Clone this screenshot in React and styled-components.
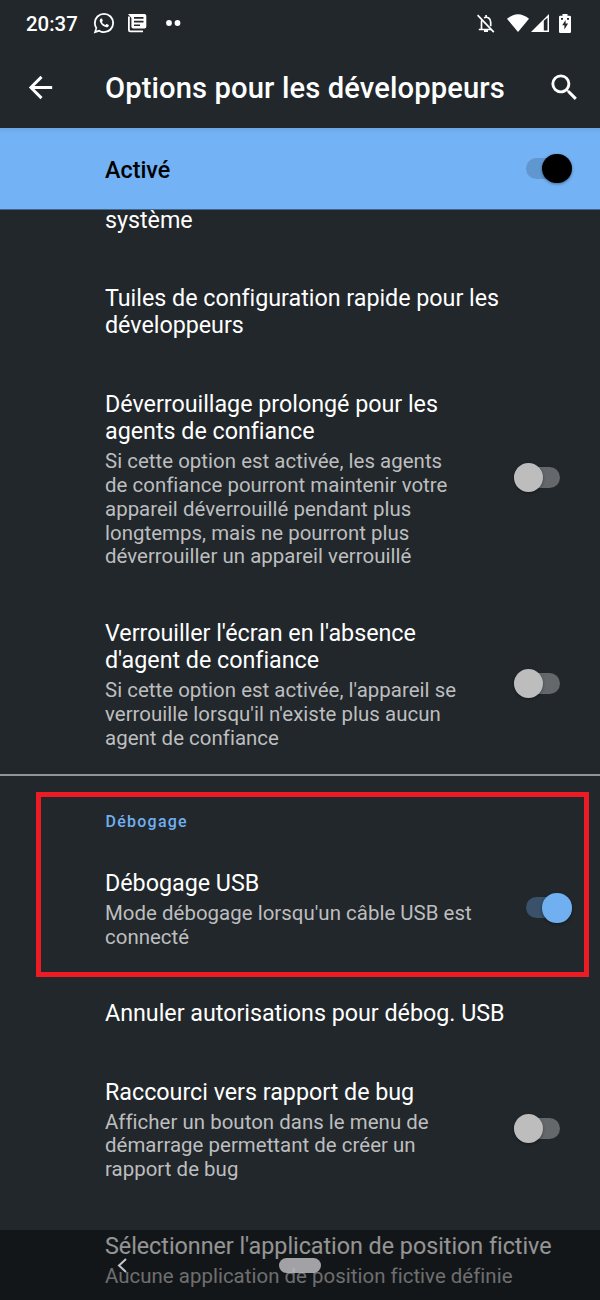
import React from "react";
import styled, { createGlobalStyle } from "styled-components";

const Global = createGlobalStyle`
  * { box-sizing: border-box; }
  body { margin: 0; background: #22272b; font-family: Roboto, "Liberation Sans", sans-serif; }
`;

const Screen = styled.div`
  position: relative;
  display: flex;
  flex-direction: column;
  width: 600px;
  height: 1300px;
  overflow: hidden;
  background: #22272b;
  color: #fff;
`;

const StatusBar = styled.div`
  display: flex;
  justify-content: space-between;
  align-items: center;
  height: 46px;
  flex: none;
  padding: 0 28.7px 0 26px;
`;

const StatusGroup = styled.div`
  display: flex;
  align-items: center;
`;

const Clock = styled.span`
  width: 67.3px;
  font-size: 20.4px;
  font-weight: 500;
  line-height: 24px;
  padding-top: 1px;
  white-space: nowrap;
`;

const Icon = styled.svg`
  display: block;
  flex: none;
  width: ${(p) => p.$w}px;
  height: ${(p) => p.$h || p.$w}px;
  margin-left: ${(p) => p.$ml || 0}px;
  overflow: visible;
`;

const Toolbar = styled.header`
  display: flex;
  align-items: center;
  height: 82px;
  flex: none;
  padding: 0 18px 0 23px;
`;

const Title = styled.h1`
  flex: 1;
  margin: 0 0 0 47px;
  padding-top: 1.6px;
  font-size: 29.17px;
  font-weight: 500;
  line-height: 34px;
  letter-spacing: 0.12px;
  white-space: nowrap;
`;

const MasterBar = styled.div`
  display: flex;
  align-items: center;
  justify-content: space-between;
  height: 82px;
  flex: none;
  padding: 3px 28.5px 0 105px;
  background: linear-gradient(#6ba6e4, #72b2f5 5px);
  border-bottom: 1px solid #406791;
  color: #000;
  font-size: 23.33px;
  font-weight: 500;
`;

const List = styled.main`
  flex: 1;
  min-height: 0;
  overflow: hidden;
`;

const Scroll = styled.div`
  margin-top: -28.7px;
`;

const Row = styled.div`
  display: flex;
  align-items: center;
  justify-content: space-between;
  padding: 25.6px ${(p) => (p.$on ? 28.5 : 40)}px ${(p) => (p.$dense ? 24.9 : 25.2)}px 105px;
`;

const RowTitle = styled.div`
  font-size: 23.3px;
  line-height: 27.34px;
  letter-spacing: -0.02px;
  white-space: pre;
`;

const Summary = styled.div`
  margin-top: 4.6px;
  font-size: 20.42px;
  line-height: 23.92px;
  letter-spacing: 0.035px;
  color: #bdbebf;
  white-space: pre;
`;

const Section = styled.section`
  position: relative;
  margin-top: -2px;
  border-top: 2px solid #92969a;
`;

const Category = styled.h2`
  margin: 0;
  height: 68.8px;
  padding: 36px 0 0 105.5px;
  font-size: 16px;
  font-weight: 500;
  line-height: 20px;
  letter-spacing: 1.25px;
  color: #70b0f2;
`;

const Highlight = styled.div`
  position: absolute;
  left: 36px;
  top: 16px;
  width: 553px;
  height: 185px;
  border: 5px solid #ed1c24;
  pointer-events: none;
`;

const Track = styled.span`
  position: relative;
  display: flex;
  align-items: center;
  justify-content: ${(p) => (p.$on ? "flex-end" : "flex-start")};
  flex: none;
  width: 46px;
  height: 29px;
  margin-bottom: ${(p) => p.$lift}px;
  &::before {
    content: "";
    position: absolute;
    inset: 4px 0;
    border-radius: 11px;
    background: ${(p) => p.$track};
  }
`;

const Thumb = styled.span`
  position: relative;
  width: 29.4px;
  height: 29.4px;
  border-radius: 50%;
  background: ${(p) => p.$color};
  box-shadow: 0 1px 3px rgba(0, 0, 0, 0.4);
`;

const NavBar = styled.nav`
  position: absolute;
  left: 0;
  right: 0;
  bottom: 0;
  height: 70px;
  display: flex;
  align-items: center;
  padding-left: 117px;
  background: rgba(0, 0, 0, 0.42);
`;

const HomePill = styled.span`
  width: 42px;
  height: 15px;
  margin-left: 152px;
  border-radius: 8px;
  background: rgba(190, 190, 193, 0.84);
`;

const THEMES = {
  off: { track: "#64686b", thumb: "#bdbdbd", lift: 4.4 },
  on: { track: "#39516a", thumb: "#70aff0", lift: 4.4 },
  master: { track: "#6197d0", thumb: "#000", lift: 3 },
};

function Switch({ kind }) {
  const t = THEMES[kind];
  return (
    <Track $on={kind !== "off"} $track={t.track} $lift={t.lift}>
      <Thumb $color={t.thumb} />
    </Track>
  );
}

function Preference({ title, summary, toggle }) {
  return (
    <Row $on={toggle === "on"} $dense={Boolean(summary)}>
      <div>
        <RowTitle>{title}</RowTitle>
        {summary && <Summary>{summary}</Summary>}
      </div>
      {toggle && <Switch kind={toggle} />}
    </Row>
  );
}

export default function App() {
  return (
    <Screen>
      <Global />
      <StatusBar>
        <StatusGroup>
          <Clock>20:37</Clock>
          <Icon $w={22} viewBox="0 0 24 24" fill="#fff">
            <path d="M16.75 13.96c.25.13.41.2.46.3.06.11.04.61-.21 1.18-.2.56-1.24 1.1-1.7 1.12-.46.02-.47.36-2.96-.73-2.49-1.09-3.99-3.75-4.11-3.92-.12-.17-.96-1.38-.92-2.61.05-1.22.69-1.8.95-2.04.24-.26.51-.29.68-.26h.47c.15 0 .36-.06.55.45l.69 1.87c.06.13.1.28.01.44l-.27.41-.39.42c-.12.12-.26.25-.12.5.12.26.62 1.09 1.32 1.78.91.88 1.71 1.17 1.95 1.3.24.14.39.12.54-.04l.81-.94c.19-.25.35-.19.58-.11l1.67.88M12 1a11 11 0 0 1 11 11 11 11 0 0 1-11 11c-1.97 0-3.8-.52-5.4-1.43L.8 23.5l1.9-5.8A10.9 10.9 0 0 1 1 12 11 11 0 0 1 12 1m0 2a9 9 0 0 0-9 9c0 1.94.62 3.74 1.66 5.2l-1.03 3.1 3.23-1.05A8.9 8.9 0 0 0 12 21a9 9 0 0 0 9-9 9 9 0 0 0-9-9z" />
          </Icon>
          <Icon $w={19} viewBox="0 0 19 19" $ml={12.3} fill="#fff">
            <path d="M0 2.4V16q0 2.2 2.2 2.2H15v-1.7H1.8V2.4z" />
            <path fillRule="evenodd" d="M0 0h16.5q1.8 0 1.8 1.8v11q0 1.8-1.8 1.8H5.2q-1.8 0-1.8-1.8V4zM6 3v1.7h9.5V3zm0 3.8v1.7h9.5V6.8zm0 3.8v1.5h6v-1.5z" />
          </Icon>
          <Icon $w={15} $h={6} viewBox="0 0 15 6" $ml={19} fill="#fff">
            <circle cx="3" cy="3" r="2.9" />
            <circle cx="11.5" cy="3" r="2.9" />
          </Icon>
        </StatusGroup>
        <StatusGroup>
          <Icon $w={18} $h={19} viewBox="0 0 18 19" fill="none" stroke="#fff" strokeWidth="1.7">
            <path d="M4.5 15V8.2a5 5 0 0 1 .7-2.4M7 3.8c3.5-1.6 6.7.8 6.7 4.4v4M1.8 15.5H14M9.1 1v2.5" />
            <path d="M7 17h4" strokeWidth="2" />
            <path d="M.6 1.1l16.2 17" />
          </Icon>
          <Icon $w={22} $h={18} viewBox="0 0 22 18" $ml={12} fill="#fff">
            <path d="M0 4.8Q11-4.4 22 4.8L11 18z" />
          </Icon>
          <Icon $w={18} viewBox="0 0 18 18" $ml={2} fill="#fff">
            <path fillRule="evenodd" d="M18 0v18H0zM12.8 6.8v9.7h3.7V3.7z" />
          </Icon>
          <Icon $w={12} $h={19} viewBox="0 0 12 19" $ml={10} fill="#fff">
            <path fillRule="evenodd" d="M3.5 0h5v1.8h2.3q1.2 0 1.2 1.2v14.8q0 1.2-1.2 1.2H1.2Q0 19 0 17.8V3q0-1.2 1.2-1.2h2.3zM6.6 6L3.2 11.2h2.2V15.6l3.7-6H6.6zM2 4v1.8h2V4zm6 0v1.8h2V4z" />
          </Icon>
        </StatusGroup>
      </StatusBar>
      <Toolbar>
        <Icon $w={35} viewBox="0 0 24 24" fill="#fff">
          <path d="M20 11H7.83l5.59-5.59L12 4l-8 8 8 8 1.41-1.41L7.83 13H20v-2z" />
        </Icon>
        <Title>Options pour les développeurs</Title>
        <Icon $w={35} viewBox="0 0 24 24" fill="#fff">
          <path d="M15.5 14h-.79l-.28-.27A6.47 6.47 0 0 0 16 9.5 6.5 6.5 0 1 0 9.5 16c1.61 0 3.09-.59 4.23-1.57l.27.28v.79l5 4.99L20.49 19l-4.99-5zm-6 0C7.01 14 5 11.99 5 9.5S7.01 5 9.5 5 14 7.01 14 9.5 11.99 14 9.5 14z" />
        </Icon>
      </Toolbar>
      <MasterBar>
        <span>Activé</span>
        <Switch kind="master" />
      </MasterBar>
      <List>
        <Scroll>
          <Preference title="système" />
          <Preference title={"Tuiles de configuration rapide pour les\ndéveloppeurs"} />
          <Preference
            title={"Déverrouillage prolongé pour les\nagents de confiance"}
            summary={"Si cette option est activée, les agents\nde confiance pourront maintenir votre\nappareil déverrouillé pendant plus\nlongtemps, mais ne pourront plus\ndéverrouiller un appareil verrouillé"}
            toggle="off"
          />
          <Preference
            title={"Verrouiller l'écran en l'absence\nd'agent de confiance"}
            summary={"Si cette option est activée, l'appareil se\nverrouille lorsqu'il n'existe plus aucun\nagent de confiance"}
            toggle="off"
          />
          <Section>
            <Category>Débogage</Category>
            <Preference
              title="Débogage USB"
              summary={"Mode débogage lorsqu'un câble USB est\nconnecté"}
              toggle="on"
            />
            <Highlight />
            <Preference title="Annuler autorisations pour débog. USB" />
            <Preference
              title="Raccourci vers rapport de bug"
              summary={"Afficher un bouton dans le menu de\ndémarrage permettant de créer un\nrapport de bug"}
              toggle="off"
            />
            <Preference
              title="Sélectionner l'application de position fictive"
              summary="Aucune application de position fictive définie"
            />
          </Section>
        </Scroll>
      </List>
      <NavBar>
        <Icon $w={10} $h={15} viewBox="0 0 10 15" fill="none" stroke="#c4c5c6" strokeWidth="2">
          <path d="M9 1L2 7.5 9 14" />
        </Icon>
        <HomePill />
      </NavBar>
    </Screen>
  );
}
